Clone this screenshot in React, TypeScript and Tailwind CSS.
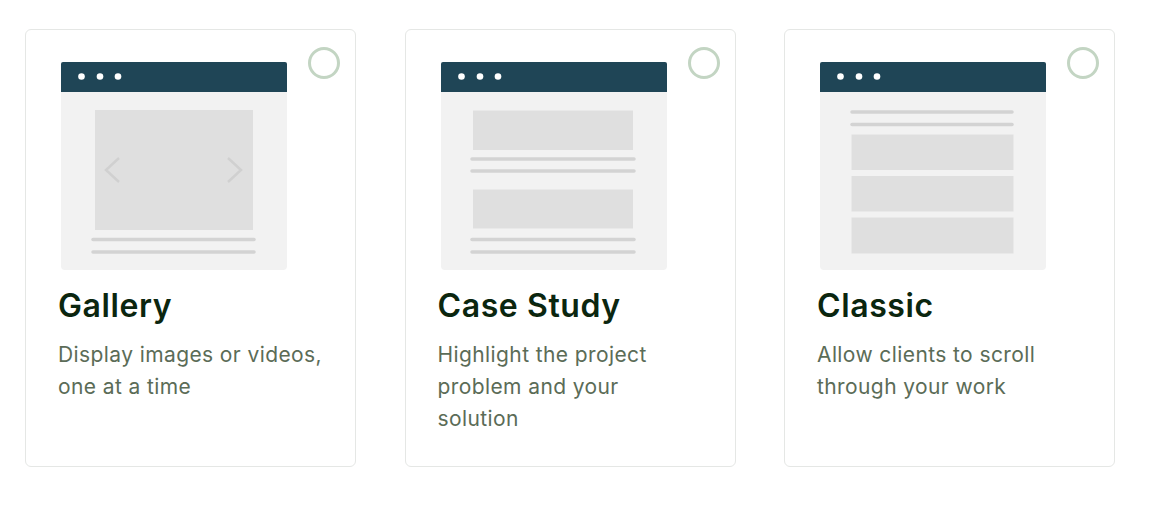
import React from 'react';

type Layout = {
  title: string;
  desc: string;
  kind: 'gallery' | 'case' | 'classic';
};

const layouts: Layout[] = [
  { title: 'Gallery', desc: 'Display images or videos, one at a time', kind: 'gallery' },
  { title: 'Case Study', desc: 'Highlight the project problem and your solution', kind: 'case' },
  { title: 'Classic', desc: 'Allow clients to scroll through your work', kind: 'classic' },
];

const BOX = '#dfdfdf';
const LINE = '#d3d3d3';

function Line({ y, x1 = 32, x2 = 193 }: { y: number; x1?: number; x2?: number }) {
  return <line x1={x1} y1={y} x2={x2} y2={y} stroke={LINE} strokeWidth={3.5} strokeLinecap="round" />;
}

function Mockup({ kind }: { kind: Layout['kind'] }) {
  return (
    <svg width="226" height="208" viewBox="0 0 226 208" className="block">
      <path d="M0 30 H226 V204 a4 4 0 0 1 -4 4 H4 a4 4 0 0 1 -4 -4 Z" fill="#f2f2f2" />
      <path d="M2 0 H224 a2 2 0 0 1 2 2 V30 H0 V2 a2 2 0 0 1 2 -2 Z" fill="#1f4556" />
      <circle cx="20.5" cy="14.5" r="3.3" fill="#fff" />
      <circle cx="39" cy="14.5" r="3.3" fill="#fff" />
      <circle cx="57" cy="14.5" r="3.3" fill="#fff" />

      {kind === 'gallery' && (
        <g>
          <rect x="34" y="48" width="158" height="120" fill={BOX} />
          <polyline points="58,96 45,108 58,120" fill="none" stroke="#d0d0d0" strokeWidth="2.5" />
          <polyline points="167,96 180,108 167,120" fill="none" stroke="#d0d0d0" strokeWidth="2.5" />
          <Line y={177.5} />
          <Line y={190} />
        </g>
      )}

      {kind === 'case' && (
        <g>
          <rect x="32" y="48.5" width="160" height="39.5" fill={BOX} />
          <Line y={97} x1={31} x2={193} />
          <Line y={109} x1={31} x2={193} />
          <rect x="32" y="127.5" width="160" height="39" fill={BOX} />
          <Line y={177.5} x1={31} x2={193} />
          <Line y={190} x1={31} x2={193} />
        </g>
      )}

      {kind === 'classic' && (
        <g>
          <Line y={50} x1={32} x2={192} />
          <Line y={62.5} x1={32} x2={192} />
          <rect x="31.5" y="72.5" width="162" height="35.5" fill={BOX} />
          <rect x="31.5" y="114" width="162" height="35.5" fill={BOX} />
          <rect x="31.5" y="155.5" width="162" height="36" fill={BOX} />
        </g>
      )}
    </svg>
  );
}

function LayoutCard({ layout }: { layout: Layout }) {
  return (
    <div className="relative w-[331px] h-[438px] shrink-0 rounded-md border border-[#e5e7e5] bg-white pt-[32px] px-[32px]">
      <span className="absolute top-[17px] right-[15px] h-[32px] w-[32px] rounded-full border-[3px] border-[#c3d5c3]" />
      <div className="ml-[3px]">
        <Mockup kind={layout.kind} />
      </div>
      <h2 className="mt-[16px] text-[32px] leading-[40px] font-semibold tracking-[0.6px] text-[#0b260f]">
        {layout.title}
      </h2>
      <p className="mt-[13px] text-[21px] leading-[32px] tracking-[0.4px] text-[#5b6c57]">{layout.desc}</p>
    </div>
  );
}

export default function App() {
  return (
    <div
      className="min-h-[518px] w-[1160px] bg-white pl-[25px] pt-[29px]"
      style={{ fontFamily: 'Inter, "Noto Sans", sans-serif' }}
    >
      <div className="flex gap-[48.5px]">
        {layouts.map((l) => (
          <LayoutCard key={l.title} layout={l} />
        ))}
      </div>
    </div>
  );
}
